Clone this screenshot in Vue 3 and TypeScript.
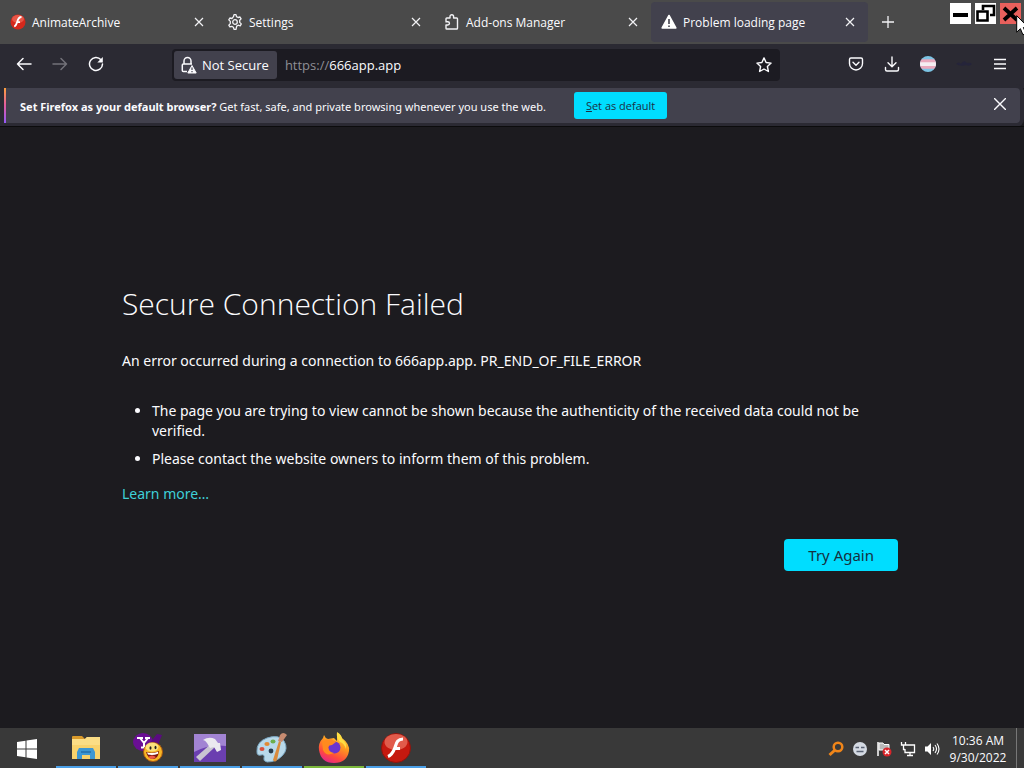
<script setup lang="ts">
import { ref } from 'vue'

interface Tab {
  title: string
  icon: 'flash' | 'gear' | 'puzzle' | 'warning'
}

const tabs: Tab[] = [
  { title: 'AnimateArchive', icon: 'flash' },
  { title: 'Settings', icon: 'gear' },
  { title: 'Add-ons Manager', icon: 'puzzle' },
  { title: 'Problem loading page', icon: 'warning' },
]
const activeTab = ref(3)
const path = ref('666app.app')

const reasons: string[] = [
  'The page you are trying to view cannot be shown because the authenticity of the received data could not be verified.',
  'Please contact the website owners to inform them of this problem.',
]
</script>

<template>
  <div class="screen">
    <header class="tab-bar">
      <div class="tabs" role="tablist">
        <div v-for="(tab, i) in tabs" :key="tab.title" class="tab" :class="{ active: i === activeTab }">
          <button class="tab-label" role="tab" :aria-selected="i === activeTab" @click="activeTab = i">
            <svg v-if="tab.icon === 'flash'" width="16" height="16" viewBox="0 0 16 16">
              <circle cx="8" cy="8" r="7.5" fill="#d5281c" />
              <ellipse cx="8" cy="5" rx="6" ry="4" fill="#f0695a" opacity=".7" />
              <path d="M11.500 3C8.600 3 8 5 7.300 7.500S6 12 4.200 12.500M6.500 8.200h3.500" fill="none" stroke="#fff" stroke-width="1.800" />
            </svg>
            <svg v-else-if="tab.icon === 'gear'" width="16" height="16" viewBox="0 0 16 16" fill="none" stroke="#f2f2f5" stroke-width="1.300" stroke-linejoin="round">
              <path d="M6.500 2.600 7 .7h2l.5 1.900 1.600.9 1.900-.5 1.100 1.800-1.400 1.400v2.200l1.600 1.500-1.100 1.900-2-.6-1.500.9L9 15.300H7l-.6-2-1.600-.9-1.900.5-1.100-1.800 1.500-1.500V7.400L1.800 5.900 2.900 4l2 .5z" />
              <circle cx="8" cy="8" r="2.300" />
            </svg>
            <svg v-else-if="tab.icon === 'puzzle'" width="16" height="16" viewBox="0 0 16 16" fill="none" stroke="#f2f2f5" stroke-width="1.400" stroke-linejoin="round">
              <path d="M2 7.500V4.800Q2 4 2.800 4H6V2.500a1.800 1.800 0 0 1 3.600 0V4h3.100q.8 0 .8.8v9.400q0 .8-.8.8H2.800q-.8 0-.8-.8V11h1.800a1.600 1.600 0 0 0 0-3.300H1.400" />
            </svg>
            <svg v-else width="16" height="16" viewBox="0 0 16 16">
              <path d="M8 1.500 14.800 14H1.200z" fill="#fff" stroke="#fff" stroke-width="1.600" stroke-linejoin="round" />
              <path d="M8 5v5M8 11.500v1.600" stroke="#42414d" stroke-width="1.600" />
            </svg>
            <span>{{ tab.title }}</span>
          </button>
          <button class="tab-close" aria-label="Close tab">
            <svg width="10" height="10" viewBox="0 0 10 10"><path d="m1 1 8 8M9 1 1 9" stroke="#f2f2f5" stroke-width="1.200" /></svg>
          </button>
        </div>
      </div>
      <button class="new-tab" aria-label="New tab">
        <svg width="14" height="14" viewBox="0 0 14 14"><path d="M7 1v12M1 7h12" stroke="#f2f2f5" stroke-width="1.300" /></svg>
      </button>
      <div class="window-controls">
        <button aria-label="Minimize">
          <svg width="21" height="21" viewBox="0 0 21 21"><path d="M3 12h15" stroke="#000" stroke-width="4" /></svg>
        </button>
        <button aria-label="Restore">
          <svg width="21" height="21" viewBox="0 0 21 21" fill="none" stroke="#000" stroke-width="2.600">
            <path d="M8 7V3h11v9h-4M2.500 8.500h10v9h-10z" />
          </svg>
        </button>
        <button class="close" aria-label="Close">
          <svg width="21" height="21" viewBox="0 0 21 21"><path d="m4 5 13 12M17 5 4 17" stroke="#000" stroke-width="3.800" /></svg>
        </button>
      </div>
    </header>

    <nav class="toolbar" aria-label="Navigation">
      <button aria-label="Back">
        <svg width="16" height="16" viewBox="0 0 16 16" fill="none" stroke="#fbfbfe" stroke-width="1.500" stroke-linecap="round" stroke-linejoin="round"><path d="M15 8H1.500M7 2.500 1.500 8 7 13.500" /></svg>
      </button>
      <button aria-label="Forward" disabled>
        <svg width="16" height="16" viewBox="0 0 16 16" fill="none" stroke="#737279" stroke-width="1.500" stroke-linecap="round" stroke-linejoin="round"><path d="M1 8h13.500M9 2.500 14.500 8 9 13.500" /></svg>
      </button>
      <button aria-label="Reload">
        <svg width="16" height="16" viewBox="0 0 16 16" fill="none" stroke="#fbfbfe" stroke-width="1.500"><path d="M13 3.800A6.500 6.500 0 1 0 14.500 8" stroke-linecap="round" /><path d="M14.800 1v5.500H9.300z" fill="#fbfbfe" stroke="none" /></svg>
      </button>
      <div class="spacer"></div>
      <div class="url-bar">
        <button class="identity">
          <svg width="16" height="18" viewBox="0 0 16 18" fill="none" stroke="#fbfbfe" stroke-width="1.500">
            <path d="M6 15.500H2.300q-1 0-1-1V9q0-1 1-1H11M3 8V5a3.500 3.500 0 0 1 7 0v3" />
            <path d="M11 9.500 15.200 17H6.800z" fill="#fbfbfe" stroke="#fbfbfe" stroke-width="1" stroke-linejoin="round" />
            <path d="M11 11.500v2.500M11 15v1.200" stroke="#42414d" stroke-width="1.200" />
          </svg>
          Not Secure
        </button>
        <label class="scheme" for="address">https://</label>
        <input id="address" v-model="path" type="text" spellcheck="false" />
        <button class="star" aria-label="Bookmark this page">
          <svg width="16" height="16" viewBox="0 0 16 16" fill="none" stroke="#fbfbfe" stroke-width="1.400" stroke-linejoin="round"><path d="m8 .9 2.100 4.600 5 .6-3.700 3.400 1 5L8 12l-4.400 2.500 1-5L.9 6.100l5-.6z" /></svg>
        </button>
      </div>
      <div class="spacer"></div>
      <button aria-label="Save to Pocket">
        <svg width="16" height="16" viewBox="0 0 16 16" fill="none" stroke="#fbfbfe" stroke-width="1.400" stroke-linecap="round" stroke-linejoin="round"><path d="M3 2h10q1.500 0 1.500 1.500V7.500a6.500 6.500 0 0 1-13 0V3.500Q1.500 2 3 2zM5 6.200l3 3 3-3" /></svg>
      </button>
      <button aria-label="Downloads">
        <svg width="16" height="16" viewBox="0 0 16 16" fill="none" stroke="#fbfbfe" stroke-width="1.400" stroke-linecap="round" stroke-linejoin="round"><path d="M8 1v9.500M4 6.800l4 4 4-4M1.500 11.500v2q0 1.500 1.500 1.500h10q1.500 0 1.500-1.500v-2" /></svg>
      </button>
      <button aria-label="Flag extension">
        <svg width="16" height="16" viewBox="0 0 16 16">
          <clipPath id="disc"><circle cx="8" cy="8" r="8" /></clipPath>
          <g clip-path="url(#disc)"><path fill="#7cc4e4" d="M0 0h16v16H0z" /><path fill="#e9a9bd" d="M0 3.200h16v9.600H0z" /><path fill="#f4eef2" d="M0 6.200h16v3.800H0z" /></g>
        </svg>
      </button>
      <button aria-label="Extension">
        <svg width="16" height="16" viewBox="0 0 16 16"><path d="M0 8q3-3 5 0 3-5 6-1 3-1 5 1-3 3-6 1-5 2-10-1z" fill="#25243a" /></svg>
      </button>
      <button aria-label="Open application menu">
        <svg width="16" height="16" viewBox="0 0 16 16"><path d="M2 3.500h12M2 8h12M2 12.500h12" stroke="#fbfbfe" stroke-width="1.500" /></svg>
      </button>
    </nav>

    <aside class="notice">
      <p><strong>Set Firefox as your default browser?</strong> Get fast, safe, and private browsing whenever you use the web.</p>
      <button class="set-default"><u>S</u>et as default</button>
      <button class="dismiss" aria-label="Dismiss">
        <svg width="12" height="12" viewBox="0 0 12 12"><path d="m0 0 12 12M12 0 0 12" stroke="#fbfbfe" stroke-width="1.400" /></svg>
      </button>
    </aside>

    <main class="page">
      <section class="error">
        <h1>Secure Connection Failed</h1>
        <p>An error occurred during a connection to 666app.app. PR_END_OF_FILE_ERROR</p>
        <ul>
          <li v-for="reason in reasons" :key="reason">{{ reason }}</li>
        </ul>
        <a href="#learn-more">Learn more…</a>
        <button class="retry">Try Again</button>
      </section>
    </main>

    <footer class="taskbar">
      <button class="start" aria-label="Start">
        <svg width="20" height="20" viewBox="0 0 20 20" fill="#fff"><path d="M0 3 8.500 1.800v7.700H0zM9.500 1.600 20 0v9.500H9.500zM0 10.500h8.500v7.700L0 17zM9.500 10.500H20V20L9.500 18.400z" /></svg>
      </button>
      <button class="app" aria-label="File Explorer">
        <svg width="32" height="32" viewBox="0 0 32 32">
          <path d="M2 5q0-1 1-1h9l3 3H2z" fill="#d99a2b" />
          <path d="M2 7h13l2-2h13v22H2z" fill="#f8d26c" />
          <path d="M2 7h13l2-2h13v8H2z" fill="#fbdd85" />
          <path d="M7 27v-7l2-4h14l2 4v7h-5v-4h-8v4z" fill="#3d97d3" />
          <path d="M11 19h10v2H11z" fill="#2878b5" />
        </svg>
      </button>
      <button class="app" aria-label="Yahoo! Messenger">
        <svg width="32" height="32" viewBox="0 0 32 32">
          <ellipse cx="11" cy="10" rx="10" ry="9" fill="#6a0f94" />
          <path d="m17 12 8-10 5 1-4 10z" fill="#5a0b80" />
          <path d="M5 6h6M13 6h5M8 6l4 5 4-5M12 11v4M9 15.500h6" stroke="#fff" stroke-width="2" fill="none" />
          <circle cx="21" cy="20" r="9.500" fill="#f8b626" stroke="#a8560f" />
          <ellipse cx="20" cy="15" rx="6.500" ry="4.500" fill="#fdea8c" opacity=".85" />
          <path d="M14 20q7 2 13-1-1 8-6 8t-7-7z" fill="#7b1510" />
          <path d="M16 25q4-3 8 0-4 4-8 0z" fill="#ef5b47" />
          <path d="M15 20.500q6 1.500 11-.8v2q-5 2-10 .8z" fill="#fff" />
          <ellipse cx="18.500" cy="16" rx="1" ry="1.800" fill="#222" /><ellipse cx="23.500" cy="15.500" rx="1" ry="1.800" fill="#222" />
        </svg>
      </button>
      <button class="app" aria-label="Hammer tool">
        <svg width="32" height="32" viewBox="0 0 32 32">
          <path d="M0 2h32v28H0z" fill="#6b3fb0" />
          <path d="M0 2h32v12Q16 12 0 20z" fill="#a284d3" />
          <path d="m18 11 3 4L6 29l-4-4z" fill="#c9c5d2" />
          <path d="M9 8q6-4 12-1l3 4 2 0 1 7-4 2-3-5-4 1-3-5q-2-3-4-3z" fill="#ebe9ef" />
        </svg>
      </button>
      <button class="app" aria-label="Paint">
        <svg width="32" height="32" viewBox="0 0 32 32">
          <path d="M1 20Q0 10 11 6q12-4 17 3 5 8-2 15-6 6-15 6-4-1-3-4 1-4-3-3-4 1-4-3z" fill="#b9d9ea" stroke="#7ca9c5" />
          <ellipse cx="6" cy="17" rx="2.500" ry="2" fill="#d9503e" /><ellipse cx="11" cy="12" rx="2.600" ry="2" fill="#e28a35" />
          <ellipse cx="17" cy="9.500" rx="2.500" ry="2" fill="#6cae4b" /><circle cx="15" cy="19" r="2.400" fill="#263a4c" />
          <path d="m17 28 6-19 2 1-4 18q-2 3-4 0z" fill="#d98a3c" /><path d="m22 9 2-6q3-4 7 0l-5 7z" fill="#c68b70" />
        </svg>
      </button>
      <button class="app current" aria-label="Firefox">
        <svg width="32" height="32" viewBox="0 0 32 32">
          <defs>
            <linearGradient id="fox" x1=".8" y1="0" x2=".3" y2="1"><stop offset="0" stop-color="#ffe34d" /><stop offset=".4" stop-color="#ff9a1f" /><stop offset=".75" stop-color="#ff4a3d" /><stop offset="1" stop-color="#e4258a" /></linearGradient>
          </defs>
          <path d="M19 1q3 1 5 5 8 6 7 13-2 12-15 12T1 18Q0 11 5 6l1-3q1 3 4 4l6-1 3 3z" fill="url(#fox)" />
          <circle cx="16.500" cy="15.500" r="6" fill="#6b35cf" />
          <path d="M4 10q4-3 9-3l5 3-4 3q-3 0-4 2 0 5 6 6-8 4-11-3z" fill="#ff8a1f" />
          <path d="M19 0q5 3 5 7 5 4 4 10-2-6-6-7-4-4-3-10z" fill="#ffdf42" />
        </svg>
      </button>
      <button class="app" aria-label="Flash Player">
        <svg width="32" height="32" viewBox="0 0 32 32">
          <circle cx="16" cy="16" r="14.500" fill="#c5190f" stroke="#8f140d" />
          <ellipse cx="16" cy="10" rx="11.500" ry="8" fill="#f0806c" opacity=".65" />
          <path d="M23 7c-6 0-6.500 4.500-8 8.500S12 23 8 24.500M14 16.500h6" fill="none" stroke="#fff" stroke-width="3.200" />
        </svg>
      </button>
      <div class="tray">
        <svg width="16" height="16" viewBox="0 0 16 16" fill="none" stroke="#f08519"><circle cx="10" cy="6" r="4.300" stroke-width="2.500" /><path d="m7 9-5.500 5" stroke-width="3" /></svg>
        <svg width="16" height="16" viewBox="0 0 16 16"><circle cx="8" cy="8" r="7" fill="#d4dae3" /><path d="M3.500 6.500h3.500M9 6.500h3.500M4.500 10.500h7" stroke="#596273" stroke-width="1.300" /></svg>
        <svg width="16" height="16" viewBox="0 0 16 16"><path d="M2 1v14" stroke="#fff" stroke-width="1.500" /><path d="M3 2h4l1 1.500h5V10H8L7 9H3z" fill="#b9b9b9" stroke="#fff" /><circle cx="11" cy="11" r="4.500" fill="#d9252a" /><path d="m9 9 4 4M13 9l-4 4" stroke="#fff" stroke-width="1.500" /></svg>
        <svg width="16" height="16" viewBox="0 0 16 16" fill="none" stroke="#fff" stroke-width="1.300"><path d="M6 4h8.500v7.500H5V8M7 14.500h6M10 11.500v3M1.500 1v3h4V1M3.500 4v4.500H5" /></svg>
        <svg width="16" height="16" viewBox="0 0 16 16"><path d="M1 5.500h2.500L7 2v12l-3.500-3.500H1z" fill="#fff" /><path d="M9 6q1.500 2 0 4M11 4q3 4 0 8M13 2.500q4 5.500 0 11" fill="none" stroke="#fff" stroke-width="1.100" /></svg>
      </div>
      <time class="clock" datetime="2022-09-30T10:36"><span>10:36 AM</span><span>9/30/2022</span></time>
      <button class="show-desktop" aria-label="Show desktop"></button>
    </footer>

    <svg class="cursor" width="14" height="22" viewBox="0 0 14 22"><path d="M.7.7v16.500l3.700-3.500 2.500 6 3-1.200-2.500-6h5z" fill="#fff" stroke="#000" /></svg>
  </div>
</template>

<style>
body {
  margin: 0;
  overflow: hidden;
}
</style>

<style scoped>
.screen {
  position: relative;
  display: flex;
  flex-direction: column;
  min-height: 100vh;
  overflow: hidden;
  background: #1c1b1f;
  color: #fbfbfe;
  font-family: "Open Sans", "Noto Sans", sans-serif;
  font-size: 12px;
}
button {
  display: flex;
  align-items: center;
  justify-content: center;
  padding: 0;
  border: 0;
  background: none;
  color: inherit;
  font: inherit;
}
svg {
  flex: none;
}
.tab-bar {
  display: flex;
  height: 44px;
  background: #4a4a4a;
}
.tabs {
  display: flex;
  flex: 0 1 868px;
  min-width: 0;
}
.tab {
  display: flex;
  flex: 1;
  min-width: 0;
  align-items: center;
  box-sizing: border-box;
  height: 40px;
  margin-top: 2px;
  padding: 0 13px 0 10px;
}
.tab.active {
  background: #42414d;
  border-radius: 4px;
}
.tab-label {
  flex: 1;
  min-width: 0;
  justify-content: flex-start;
  gap: 6px;
  white-space: nowrap;
}
.tab-close {
  height: 20px;
}
.new-tab {
  width: 40px;
}
.window-controls {
  display: flex;
  gap: 4px;
  margin-left: auto;
  padding: 3px 3px 0 0;
}
.window-controls button {
  width: 21px;
  height: 21px;
  background: #fff;
}
.window-controls .close {
  background: #e8605c;
}
.toolbar {
  display: flex;
  align-items: center;
  height: 44px;
  padding: 0 6px;
  background: #2b2a33;
}
.toolbar > button {
  width: 36px;
  height: 32px;
  padding-bottom: 4px;
}
.spacer {
  flex: 1;
}
.url-bar {
  display: flex;
  flex: 0 1 608px;
  align-items: center;
  box-sizing: border-box;
  height: 32px;
  margin-bottom: 3px;
  padding: 2px;
  border-radius: 4px;
  background: #1c1b22;
  font-size: 13px;
}
.identity {
  flex: none;
  gap: 5px;
  height: 28px;
  padding: 0 8px 0 7px;
  border-radius: 3px;
  background: #42414d;
}
.scheme {
  padding-left: 8px;
  color: #8f8f96;
}
input {
  flex: 1;
  min-width: 0;
  padding: 0;
  border: 0;
  outline: 0;
  background: none;
  color: inherit;
  font: inherit;
}
.star {
  width: 28px;
  height: 28px;
}
.notice {
  display: flex;
  align-items: center;
  box-sizing: border-box;
  height: 35px;
  margin: 0 4px;
  padding-right: 14px;
  border-left: 2px solid;
  border-image: linear-gradient(#ffa436, #e25ba0, #9059ff) 1;
  border-radius: 0 4px 4px 0;
  background: #42414d;
  box-shadow: 0 0 0 4px #2b2a33;
  font-size: 11px;
}
.notice p {
  margin: 0 28px 0 14px;
  padding-top: 2px;
  font-family: "Noto Sans", "Open Sans", sans-serif;
  white-space: nowrap;
}
.set-default {
  display: block;
  height: 27px;
  padding: 0 12px;
  border-radius: 3px;
  background: #00ddff;
  color: #1c3044;
}
.dismiss {
  height: 24px;
  margin-left: auto;
  padding-bottom: 4px;
}
.page {
  display: flex;
  flex: 1;
  align-items: center;
  justify-content: center;
  margin-top: 3px;
  padding: 0 4px 2px 0;
  border-top: 1px solid #0c0c0d;
  background: #1c1b1f;
}
.error {
  display: flex;
  flex-direction: column;
  width: 776px;
  max-width: 90%;
  font-family: "Noto Sans", "Open Sans", sans-serif;
  font-size: 14px;
  line-height: 20px;
}
h1 {
  margin: 0 0 25px;
  font-family: "Open Sans", "Noto Sans", sans-serif;
  font-size: 30px;
  font-weight: 300;
  line-height: 44px;
}
.error p {
  margin: 0 0 30px;
}
ul {
  margin: 0 0 15px;
  padding-left: 30px;
}
li + li {
  margin-top: 8px;
}
a {
  align-self: flex-start;
  color: #3fd0d8;
  text-decoration: none;
}
.retry {
  align-self: flex-end;
  height: 32px;
  margin-top: 35px;
  padding: 0 24px;
  border-radius: 4px;
  background: #00ddff;
  color: #15313f;
  font-size: 15px;
}
.taskbar {
  display: flex;
  height: 40px;
  background: #393939;
}
.start {
  width: 54px;
  padding-top: 2px;
}
.app {
  width: 60px;
  margin-left: 2px;
  padding-top: 2px;
  border-bottom: 2px solid #4ba0e8;
}
.app.current {
  border-color: #7cb93c;
}
.tray {
  display: flex;
  align-items: center;
  gap: 8px;
  margin-left: auto;
  padding-top: 2px;
}
.clock {
  display: flex;
  flex-direction: column;
  justify-content: center;
  width: 76px;
  padding-top: 2px;
  line-height: 17px;
  text-align: center;
}
.show-desktop {
  width: 8px;
  border-left: 1px solid #777;
}
.cursor {
  position: absolute;
  top: 15px;
  right: -6px;
}
</style>
